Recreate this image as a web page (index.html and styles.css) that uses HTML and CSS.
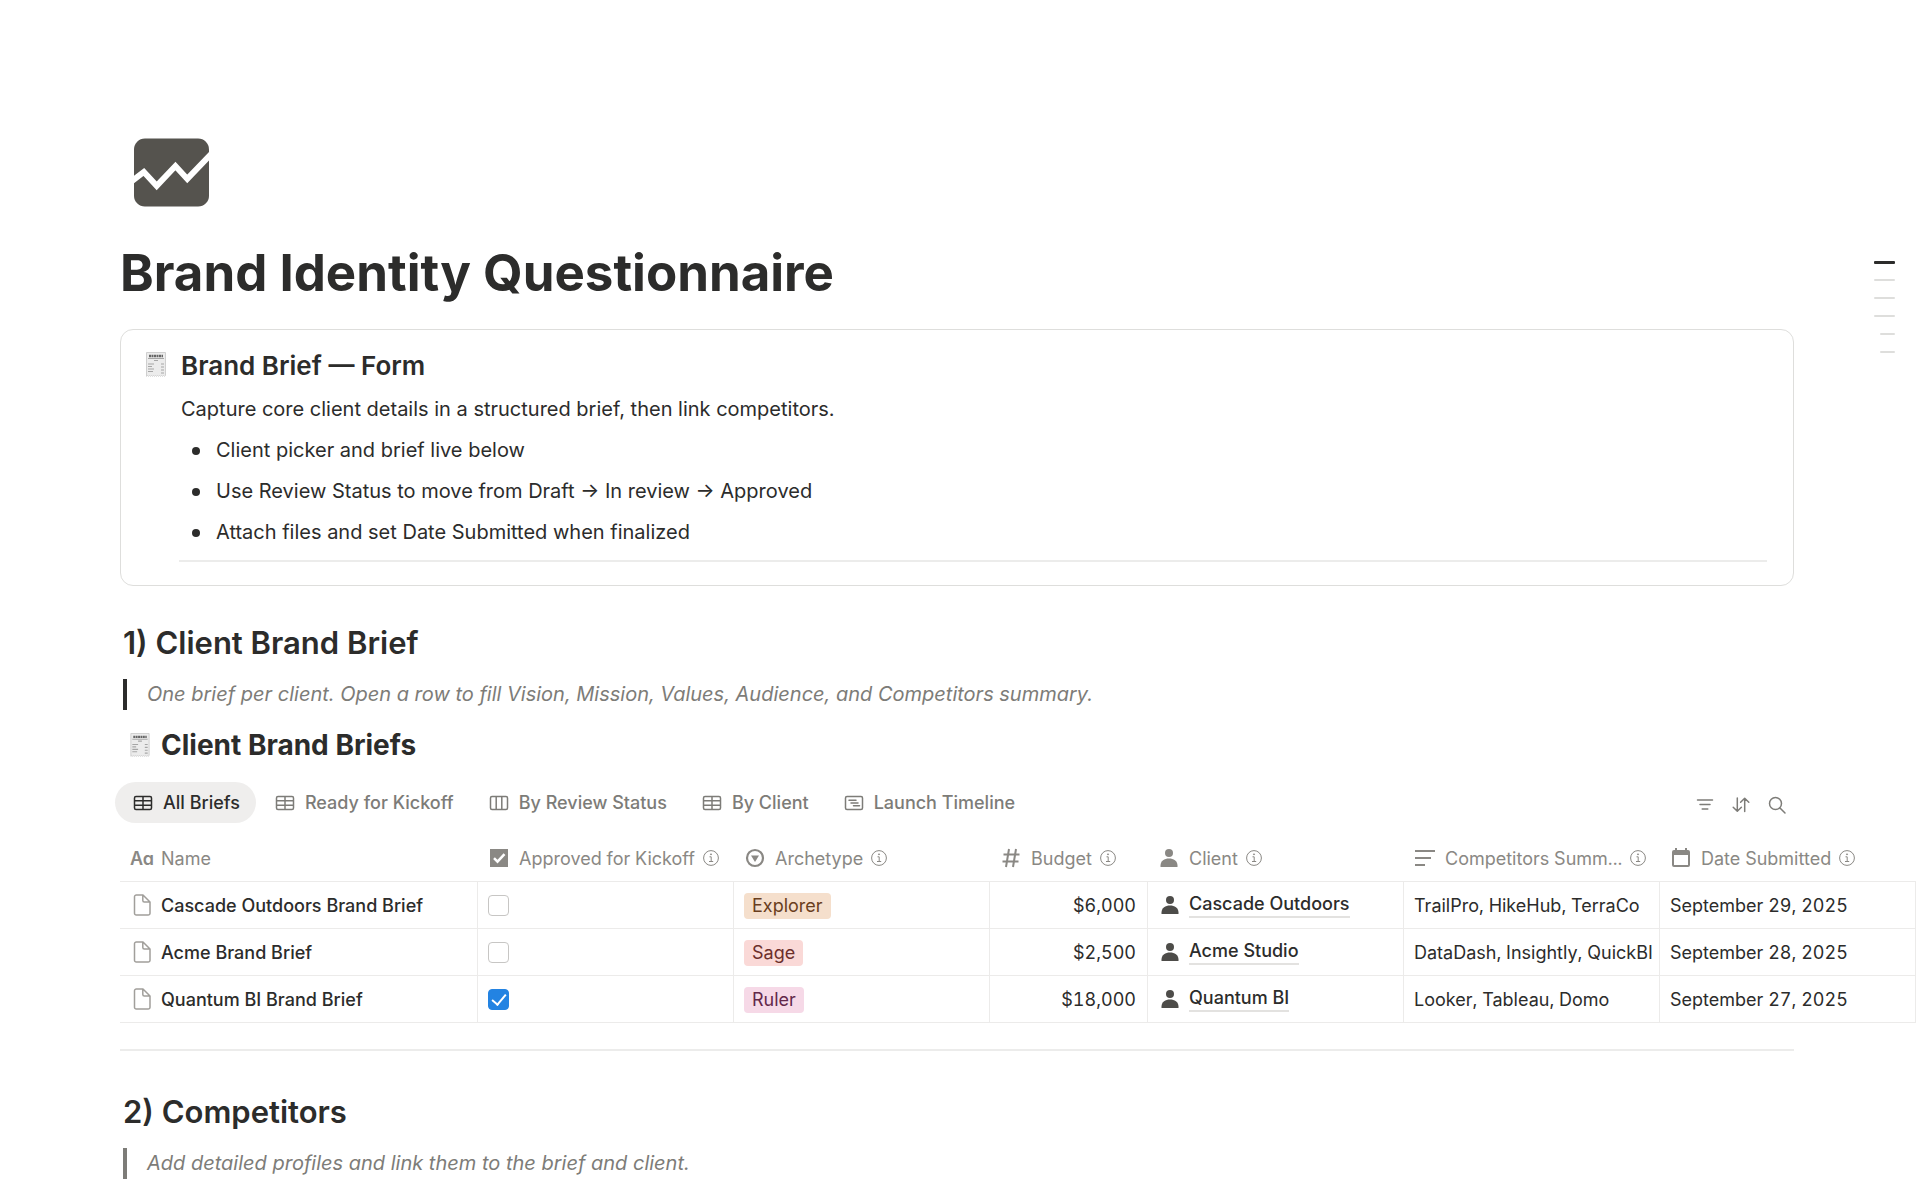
FILE: index.html
```html
<!DOCTYPE html>
<html lang="en">
<head>
    <meta charset="UTF-8">
    <meta name="viewport" content="width=device-width, initial-scale=1.0">
    <title>Brand Identity Questionnaire</title>
    <link rel="stylesheet" href="styles.css">
</head>
<body>

    <!-- Icon shapes used more than once -->
    <svg class="sprite" aria-hidden="true">
        <symbol id="i-receipt" viewBox="0 0 20 25">
            <path d="M.5.5h19v23l-1 .8-1-.8-1 .8-1-.8-1 .8-1-.8-1 .8-1-.8-1 .8-1-.8-1 .8-1-.8-1 .8-1-.8-1 .8-1-.8-1 .8-1-.8-1 .8z" fill="#ececec" stroke="#cfcfcf"/>
            <path d="M3 4h14" stroke="#666" stroke-width="2.500" stroke-dasharray="2 .5"/>
            <path d="M2 6.500h16" stroke="#888" stroke-width=".7"/>
            <path d="M8 8.500h4M2 12h6M2 14.500h4M2 17h6M2 19.500h5M15 12h3M15 15h3M15 18h3M15 21h3" stroke="#a6a6a6" stroke-width="1.200"/>
        </symbol>
        <symbol id="i-table" viewBox="0 0 20 20">
            <path d="M3 3.500h14a1.500 1.500 0 0 1 1.500 1.500v10a1.500 1.500 0 0 1-1.500 1.500H3A1.500 1.500 0 0 1 1.500 15V5A1.500 1.500 0 0 1 3 3.500zM1.500 7.800h17M1.500 12.200h17M10 3.500v13"/>
        </symbol>
        <symbol id="i-board" viewBox="0 0 20 20">
            <path d="M3 3.500h14a1.500 1.500 0 0 1 1.500 1.500v10a1.500 1.500 0 0 1-1.500 1.500H3A1.500 1.500 0 0 1 1.500 15V5A1.500 1.500 0 0 1 3 3.500zM7.200 3.500v13M12.800 3.500v13"/>
        </symbol>
        <symbol id="i-timeline" viewBox="0 0 20 20">
            <path d="M3 3.500h14a1.500 1.500 0 0 1 1.500 1.500v10a1.500 1.500 0 0 1-1.500 1.500H3A1.500 1.500 0 0 1 1.500 15V5A1.500 1.500 0 0 1 3 3.500zM5 7.200h7M7 10h7M9.500 12.800h6"/>
        </symbol>
        <symbol id="i-info" viewBox="0 0 18 18">
            <circle cx="9" cy="9" r="7.400"/>
            <path d="M7.500 7.800H9.200v4.600M7 12.500h4.200"/>
            <circle cx="9" cy="5.300" r=".5" fill="currentColor"/>
        </symbol>
        <symbol id="i-person" viewBox="0 0 20 20">
            <circle cx="10" cy="5" r="4"/>
            <path d="M1.500 19v-1.500C1.500 13 5.500 10.500 10 10.500s8.500 2.500 8.500 7V19z"/>
        </symbol>
        <symbol id="i-page" viewBox="0 0 20 24">
            <path d="M4.500 2H11l7 7v11.200a1.800 1.800 0 0 1-1.800 1.800H4.300a1.800 1.800 0 0 1-1.800-1.800V3.800A1.800 1.800 0 0 1 4.500 2zM10.800 2v5.500a1.500 1.500 0 0 0 1.500 1.500H18"/>
        </symbol>
    </svg>

    <main class="page">
        <svg class="page-icon" viewBox="0 0 76 69" aria-hidden="true">
            <rect width="76" height="69" rx="11" fill="#55534e"/>
            <path d="M-3 44l13-10 13 14L42 28l12 13L79 15" fill="none" stroke="#fff" stroke-width="6"/>
        </svg>
        <h1>Brand Identity Questionnaire</h1>

        <section class="callout">
            <svg class="receipt" aria-hidden="true"><use href="#i-receipt"/></svg>
            <div class="callout-body">
                <h3>Brand Brief — Form</h3>
                <p>Capture core client details in a structured brief, then link competitors.</p>
                <ul>
                    <li>Client picker and brief live below</li>
                    <li>Use Review Status to move from Draft → In review → Approved</li>
                    <li>Attach files and set Date Submitted when finalized</li>
                </ul>
                <hr>
            </div>
        </section>

        <h2>1) Client Brand Brief</h2>
        <blockquote>One brief per client. Open a row to fill Vision, Mission, Values, Audience, and Competitors summary.</blockquote>

        <!-- Briefs database -->
        <section class="database">
            <h3 class="db-title">
                <svg class="receipt" aria-hidden="true"><use href="#i-receipt"/></svg>
                Client Brand Briefs
            </h3>
            <div class="toolbar">
                <div class="tabs">
                    <button class="tab active"><svg class="icon line"><use href="#i-table"/></svg>All Briefs</button>
                    <button class="tab"><svg class="icon line"><use href="#i-table"/></svg>Ready for Kickoff</button>
                    <button class="tab"><svg class="icon line"><use href="#i-board"/></svg>By Review Status</button>
                    <button class="tab"><svg class="icon line"><use href="#i-table"/></svg>By Client</button>
                    <button class="tab"><svg class="icon line"><use href="#i-timeline"/></svg>Launch Timeline</button>
                </div>
                <div class="tools">
                    <button aria-label="Filter"><svg class="icon line" viewBox="0 0 20 20"><path d="M2.500 5h15M5 9.500h10M7.200 14h5.600"/></svg></button>
                    <button aria-label="Sort"><svg class="icon line" viewBox="0 0 20 20"><path d="M6.300 3v13M2.200 12.200l4.100 4.100 4.100-4.100M13.700 16.500v-13M9.600 7.300l4.100-4.100 4.100 4.100"/></svg></button>
                    <button aria-label="Search"><svg class="icon line" viewBox="0 0 20 20"><circle cx="8.500" cy="8.500" r="6"/><path d="M13 13l5 5"/></svg></button>
                </div>
            </div>

            <table>
                <colgroup>
                    <col class="col-name"><col class="col"><col class="col"><col class="col-budget"><col class="col"><col class="col"><col class="col">
                </colgroup>
                <thead>
                    <tr>
                        <th><div class="head"><span class="aa" aria-hidden="true">Aa</span><span class="label">Name</span></div></th>
                        <th><div class="head">
                            <svg class="icon" viewBox="0 0 20 20"><path d="M1 1h18v18H1z"/><path d="M5 10.200l3.500 3.500 7-7.500" fill="none" stroke="#fff" stroke-width="2.500"/></svg>
                            <span class="label">Approved for Kickoff</span><svg class="info"><use href="#i-info"/></svg>
                        </div></th>
                        <th><div class="head">
                            <svg class="icon" viewBox="0 0 20 20"><circle cx="10" cy="10" r="8" fill="none" stroke="currentColor" stroke-width="2.200"/><path d="M6 7.500h8l-4 6.500z"/></svg>
                            <span class="label">Archetype</span><svg class="info"><use href="#i-info"/></svg>
                        </div></th>
                        <th><div class="head">
                            <svg class="icon" viewBox="0 0 20 20"><path d="M8 1L5 19M15 1l-3 18M2.500 6.500h16M1.500 13.500h16" fill="none" stroke="currentColor" stroke-width="2"/></svg>
                            <span class="label">Budget</span><svg class="info"><use href="#i-info"/></svg>
                        </div></th>
                        <th><div class="head">
                            <svg class="icon"><use href="#i-person"/></svg>
                            <span class="label">Client</span><svg class="info"><use href="#i-info"/></svg>
                        </div></th>
                        <th><div class="head">
                            <svg class="icon" viewBox="0 0 20 20"><path d="M0 3h20M0 10h16M0 17h10" fill="none" stroke="currentColor" stroke-width="2"/></svg>
                            <span class="label">Competitors Summ...</span><svg class="info"><use href="#i-info"/></svg>
                        </div></th>
                        <th><div class="head">
                            <svg class="icon" viewBox="0 0 20 20"><path fill-rule="evenodd" d="M4 0h2v2h8V0h2v2h1a2 2 0 0 1 2 2v13a2 2 0 0 1-2 2H3a2 2 0 0 1-2-2V4a2 2 0 0 1 2-2h1zM3 7v10h14V7z"/></svg>
                            <span class="label">Date Submitted</span><svg class="info"><use href="#i-info"/></svg>
                        </div></th>
                    </tr>
                </thead>
                <tbody>
                    <tr>
                        <td><div class="name"><svg class="page-glyph line"><use href="#i-page"/></svg>Cascade Outdoors Brand Brief</div></td>
                        <td><input type="checkbox" aria-label="Approved for Kickoff: Cascade Outdoors"></td>
                        <td><span class="tag orange">Explorer</span></td>
                        <td class="money">$6,000</td>
                        <td><div class="client"><svg class="icon"><use href="#i-person"/></svg><a href="#">Cascade Outdoors</a></div></td>
                        <td>TrailPro, HikeHub, TerraCo</td>
                        <td>September 29, 2025</td>
                    </tr>
                    <tr>
                        <td><div class="name"><svg class="page-glyph line"><use href="#i-page"/></svg>Acme Brand Brief</div></td>
                        <td><input type="checkbox" aria-label="Approved for Kickoff: Acme"></td>
                        <td><span class="tag red">Sage</span></td>
                        <td class="money">$2,500</td>
                        <td><div class="client"><svg class="icon"><use href="#i-person"/></svg><a href="#">Acme Studio</a></div></td>
                        <td>DataDash, Insightly, QuickBI</td>
                        <td>September 28, 2025</td>
                    </tr>
                    <tr>
                        <td><div class="name"><svg class="page-glyph line"><use href="#i-page"/></svg>Quantum BI Brand Brief</div></td>
                        <td><input type="checkbox" aria-label="Approved for Kickoff: Quantum BI" checked></td>
                        <td><span class="tag pink">Ruler</span></td>
                        <td class="money">$18,000</td>
                        <td><div class="client"><svg class="icon"><use href="#i-person"/></svg><a href="#">Quantum BI</a></div></td>
                        <td>Looker, Tableau, Domo</td>
                        <td>September 27, 2025</td>
                    </tr>
                </tbody>
            </table>
        </section>

        <hr class="divider">

        <h2>2) Competitors</h2>
        <blockquote class="muted">Add detailed profiles and link them to the brief and client.</blockquote>
    </main>

    <!-- Outline markers on the right edge -->
    <nav class="outline" aria-label="Page outline">
        <span class="mark current"></span>
        <span class="mark"></span>
        <span class="mark"></span>
        <span class="mark"></span>
        <span class="mark short"></span>
        <span class="mark short"></span>
    </nav>

</body>
</html>
```
FILE: styles.css
```css
* {
    box-sizing: border-box;
}
body {
    margin: 0;
    font-family: Inter, "Liberation Sans", sans-serif;
    font-size: 20px;
    line-height: 31px;
    color: #2c2c2b;
    background-color: #fff;
    overflow-x: hidden;
}
h1, h2, h3, p, ul, blockquote {
    margin: 0;
}
button {
    font: inherit;
    color: inherit;
    background: none;
    border: none;
    padding: 0;
    cursor: pointer;
}
.sprite {
    display: none;
}
.icon {
    width: 20px;
    height: 20px;
    flex: none;
    fill: currentColor;
}
.line {
    fill: none;
    stroke: currentColor;
    stroke-width: 1.500;
    stroke-linecap: round;
    stroke-linejoin: round;
}

.page {
    padding: 138px 126px 0 120px;
}
.page-icon {
    display: block;
    width: 75px;
    height: 69px;
    margin-left: 14px;
}
h1 {
    margin-top: 35px;
    font-size: 51px;
    line-height: 62px;
    font-weight: 700;
}
h2 {
    padding-left: 3px;
    font-size: 31px;
    line-height: 40px;
    font-weight: 600;
}
blockquote {
    margin: 16px 0 0 3px;
    padding-left: 20px;
    border-left: 4px solid #2c2c2b;
    font-style: italic;
    color: #7d7c78;
}
blockquote.muted {
    border-left-color: #7d7c78;
}

/* Callout */
.callout {
    display: flex;
    gap: 15px;
    margin-top: 25px;
    padding: 16px 26px 23px 25px;
    border: 1px solid #dededc;
    border-radius: 13px;
}
.receipt {
    width: 20px;
    height: 25px;
    flex: none;
}
.callout .receipt {
    margin-top: 6px;
}
.callout-body {
    flex: 1;
}
.callout h3 {
    font-size: 26px;
    line-height: 40px;
    font-weight: 600;
}
.callout p {
    margin: 8px 0 10px;
}
.callout ul {
    display: flex;
    flex-direction: column;
    gap: 10px;
    padding-left: 11px;
    list-style: none;
}
.callout li {
    display: flex;
    align-items: center;
    gap: 16px;
}
.callout li::before {
    content: "";
    width: 8px;
    height: 8px;
    border-radius: 50%;
    background-color: #2c2c2b;
}
hr {
    height: 2px;
    margin: 0;
    border: none;
    background-color: #ececeb;
}
.callout hr {
    margin: 12px 0 0 -2px;
}
.callout + h2 {
    margin-top: 37px;
}

/* Database */
.db-title {
    display: flex;
    align-items: center;
    gap: 11px;
    margin-top: 15px;
    padding-left: 10px;
    font-size: 28px;
    line-height: 40px;
    font-weight: 700;
}
.db-title .receipt {
    height: 24px;
}
.toolbar {
    display: flex;
    align-items: center;
    justify-content: space-between;
    margin: 17px 7px 0 -5px;
}
.tabs {
    display: flex;
    gap: 1px;
}
.tab {
    display: flex;
    align-items: center;
    gap: 10px;
    height: 41px;
    padding: 0 16px 0 18px;
    border-radius: 21px;
    font-size: 18px;
    font-weight: 500;
    color: #7d7c78;
}
.tab.active {
    color: #2c2c2b;
    background-color: #efeeed;
}
.tools {
    display: flex;
    gap: 16px;
    padding-top: 5px;
    color: #7d7c78;
}
.tools svg {
    display: block;
}

table {
    width: 1796px;
    margin-top: 12px;
    table-layout: fixed;
    border-collapse: separate;
    border-spacing: 0;
    font-size: 18px;
    line-height: 27px;
    font-variant-numeric: tabular-nums;
}
.col-name {
    width: 358px;
}
.col {
    width: 256px;
}
.col-budget {
    width: 158px;
}
th, td {
    height: 47px;
    padding: 0 11px 0 10px;
    border-bottom: 1px solid #ecebea;
    text-align: left;
    white-space: nowrap;
}
td {
    border-right: 1px solid #ecebea;
}
th {
    font-weight: 400;
    color: #8a8884;
}
th + th {
    padding-left: 11px;
}
.head {
    display: flex;
    align-items: center;
    gap: 10px;
}
.aa {
    width: 21px;
    font-size: 18px;
    font-weight: 600;
    font-feature-settings: "cv11";
}
.info {
    width: 18px;
    height: 18px;
    flex: none;
    margin-left: -3px;
    fill: none;
    stroke: currentColor;
}
.name, .client {
    display: flex;
    align-items: center;
    gap: 9px;
    font-weight: 500;
}
.client {
    padding-left: 2px;
}
.page-glyph {
    width: 20px;
    height: 24px;
    margin-left: 2px;
    color: #a19f9b;
}
.client .icon {
    color: #4d4c49;
}
.client a {
    color: inherit;
    line-height: 24px;
    text-decoration: none;
    border-bottom: 2px solid #e3e2e0;
}
.money {
    text-align: right;
}
.tag {
    display: inline-block;
    padding: 0 8px;
    line-height: 26px;
    border-radius: 4px;
}
.orange {
    background-color: #f5dfcc;
    color: #6a3e1d;
}
.red {
    background-color: #fad9d7;
    color: #6c2f2b;
}
.pink {
    background-color: #f6d9e7;
    color: #63284a;
}
input[type="checkbox"] {
    appearance: none;
    display: grid;
    place-items: center;
    width: 21px;
    height: 21px;
    margin: 0;
    border: 1px solid #c7c6c4;
    border-radius: 4px;
}
input[type="checkbox"]:checked {
    border-color: #2383e2;
    background-color: #2383e2;
}
input[type="checkbox"]:checked::after {
    content: "";
    width: 6px;
    height: 12px;
    margin-bottom: 3px;
    border: solid #fff;
    border-width: 0 2px 2px 0;
    transform: rotate(40deg);
}
.divider {
    margin-top: 26px;
}
.divider + h2 {
    margin-top: 41px;
}

.outline {
    position: absolute;
    top: 261px;
    right: 25px;
    display: flex;
    flex-direction: column;
    align-items: flex-end;
    gap: 16px;
}
.mark {
    width: 21px;
    height: 2px;
    border-radius: 1px;
    background-color: #dededc;
}
.mark.short {
    width: 15px;
}
.mark.current {
    height: 3px;
    margin-bottom: -1px;
    background-color: #2c2c2b;
}
```
